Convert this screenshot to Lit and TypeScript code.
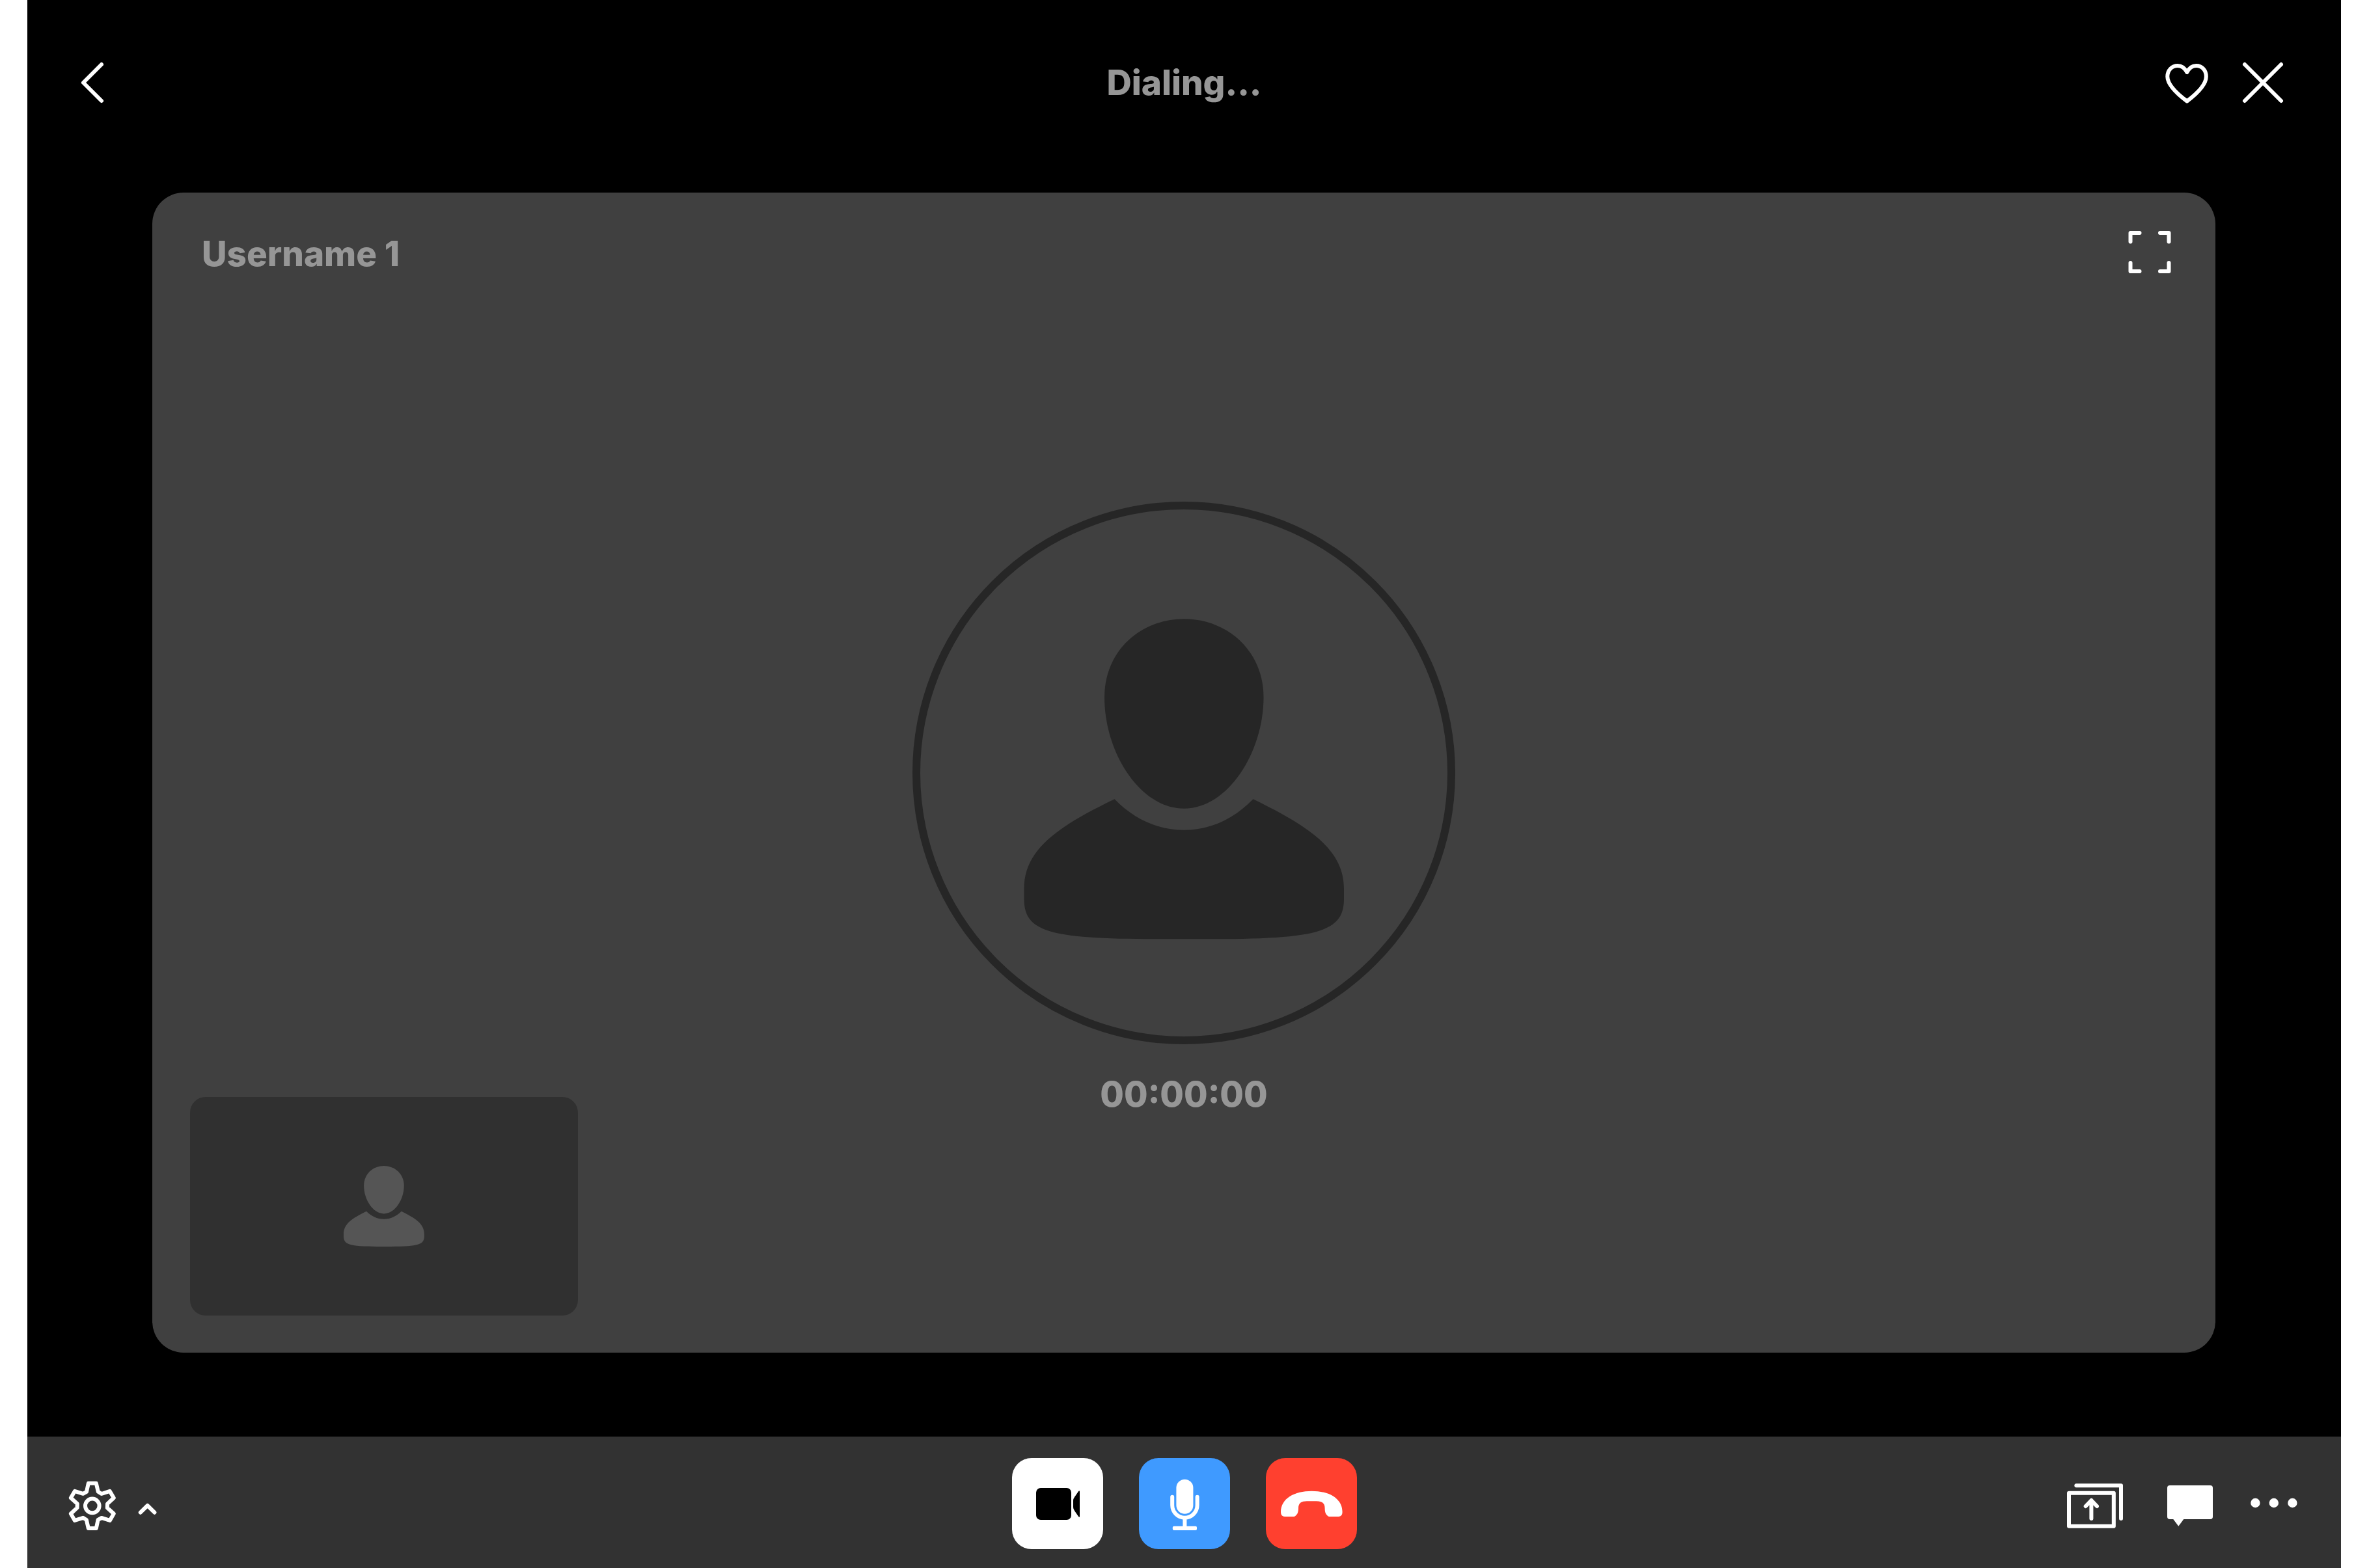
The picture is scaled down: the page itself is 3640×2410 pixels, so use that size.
import { LitElement, html, css, svg } from "lit";
import { customElement, property } from "lit/decorators.js";

/** Outline of a six-toothed cog around (cx, cy). */
function cogPath(cx: number, cy: number): string {
  const tooth = [
    [-6, -34.6],
    [6, -34.6],
    [9, -21.6],
    [14.2, -18.4],
  ];
  const points: string[] = [];
  for (let i = 0; i < 6; i++) {
    const a = (i * Math.PI) / 3;
    for (const [x, y] of tooth) {
      const px = cx + x * Math.cos(a) - y * Math.sin(a);
      const py = cy + x * Math.sin(a) + y * Math.cos(a);
      points.push(`${px.toFixed(2)} ${py.toFixed(2)}`);
    }
  }
  return `M${points.join("L")}Z`;
}

const person = svg`
  <path d="M245.7 0C180 0 123.5 48 123.5 120.5C123.5 205 178 291.5 245.7 291.5C313 291.5 368 205 368 120.5C368 48 311 0 245.7 0Z"/>
  <path d="M139 277C168 307 205 324.5 245.7 324.5S323 307 352 277C440 320 491.5 355 491.5 415V430C491.5 480 455 492 288 492H203C36 492 0 480 0 430V415C0 355 50 320 139 277Z"/>
`;

@customElement("call-avatar")
export class CallAvatar extends LitElement {
  @property({ type: Boolean }) ringed = false;

  static styles = css`
    :host {
      display: block;
    }
    .art {
      display: block;
      width: 100%;
      fill: currentColor;
    }
    .ring {
      fill: none;
      stroke: currentColor;
      stroke-width: 12;
    }
  `;

  render() {
    return this.ringed
      ? html`<svg class="art" viewBox="0 0 834 834" aria-hidden="true">
          <circle class="ring" cx="417" cy="417" r="411" />
          <g transform="translate(171.5 180.3)">${person}</g>
        </svg>`
      : html`<svg class="art" viewBox="0 0 492 492" aria-hidden="true">${person}</svg>`;
  }
}

@customElement("app-root")
export class AppRoot extends LitElement {
  @property() status = "Dialing...";
  @property() name = "Username 1";
  @property() elapsed = "00:00:00";

  static styles = css`
    :host {
      display: block;
      box-sizing: border-box;
      min-height: 100vh;
      padding: 0 43px 0 42px;
      background: #fff;
      color: #969696;
      font: 800 53px/60px Inter, "Liberation Sans", sans-serif;
    }
    .call {
      display: flex;
      flex-direction: column;
      min-height: 100vh;
      background: #000;
    }
    .label {
      margin: 0;
      font: inherit;
    }
    .icon-button {
      display: block;
      padding: 0;
      border: 0;
      background: none;
      color: #fff;
      cursor: pointer;
    }
    .icon {
      display: block;
      fill: currentColor;
    }
    .line {
      fill: none;
      stroke: currentColor;
      stroke-width: 6;
      stroke-linecap: round;
      stroke-linejoin: round;
    }
    .header {
      display: grid;
      grid-template-columns: 1fr auto 1fr;
      align-items: center;
      padding: 83px 56px;
    }
    .header-actions {
      display: flex;
      justify-content: flex-end;
      gap: 29px;
      padding-right: 20px;
    }
    .stage {
      display: flex;
      flex: 1;
      padding: 42px 193px 129px 192px;
    }
    .card {
      display: grid;
      flex: 1;
      grid-template-rows: 1fr auto 1fr;
      padding: 58px 58px 57px;
      border-radius: 48px;
      background: #404040;
    }
    .card-top {
      display: flex;
      align-items: flex-end;
      justify-content: space-between;
      align-self: start;
      padding: 0 10px 0 18px;
    }
    .peer {
      justify-self: center;
      width: 834px;
      max-width: 100%;
      color: #262626;
    }
    .card-bottom {
      display: grid;
      grid-template-columns: 1fr auto 1fr;
    }
    .timer {
      padding-top: 47px;
    }
    .self-view {
      display: flex;
      align-items: center;
      justify-content: center;
      align-self: end;
      width: 596px;
      height: 336px;
      border-radius: 24px;
      background: #303030;
      color: #555;
    }
    .self-avatar {
      width: 124px;
    }
    .toolbar {
      display: grid;
      grid-template-columns: 1fr auto 1fr;
      align-items: center;
      padding: 33px 56px 29px;
      background: #323232;
    }
    .settings {
      display: flex;
      gap: 20px;
    }
    .controls {
      display: flex;
      gap: 55px;
    }
    .tools {
      display: flex;
      justify-content: flex-end;
      gap: 48px;
    }
    .round {
      border-radius: 30px;
    }
    .camera {
      background: #fff;
      color: #000;
    }
    .mic {
      background: #3f9aff;
    }
    .hang-up {
      background: #ff402f;
    }
  `;

  render() {
    return html`
      <div class="call">
        <header class="header">
          <div>
            <button class="icon-button" aria-label="Back">
              <svg class="icon" width="88" height="88" viewBox="0 0 88 88">
                <path class="line" d="M58 16L30 44L58 72" />
              </svg>
            </button>
          </div>
          <h1 class="label">${this.status}</h1>
          <div class="header-actions">
            <button class="icon-button" aria-label="Favourite">
              <svg class="icon" width="88" height="88" viewBox="0 0 88 88">
                <path class="line" d="M44.3 28C41 22 36 18 30 18C21 18 14.3 25 14.3 34.7C14.3 46 25 58 44.3 72.5C63.5 58 73.8 46 73.8 34.7C73.8 25 67.5 18 58.5 18C52.5 18 47.5 22 44.3 28Z" />
              </svg>
            </button>
            <button class="icon-button" aria-label="Close">
              <svg class="icon" width="88" height="88" viewBox="0 0 88 88">
                <path class="line" d="M16 16L72 72M72 16L16 72" />
              </svg>
            </button>
          </div>
        </header>

        <main class="stage">
          <section class="card">
            <div class="card-top">
              <h2 class="label">${this.name}</h2>
              <button class="icon-button" aria-label="Full screen">
                <svg class="icon" width="66" height="66" viewBox="0 0 66 66">
                  <path class="line" d="M3.5 17.5V4H17.5M49 4H62.5V17.5M62.5 50V63H49M17.5 63H3.5V50" />
                </svg>
              </button>
            </div>
            <call-avatar class="peer" ringed></call-avatar>
            <div class="card-bottom">
              <div class="self-view">
                <call-avatar class="self-avatar"></call-avatar>
              </div>
              <time class="timer">${this.elapsed}</time>
            </div>
          </section>
        </main>

        <footer class="toolbar">
          <div class="settings">
            <button class="icon-button" aria-label="Settings">
              <svg class="icon" width="88" height="88" viewBox="0 0 88 88">
                <path class="line" d=${cogPath(43.8, 47.4)} />
                <circle class="line" cx="43.8" cy="47.4" r="10.8" />
              </svg>
            </button>
            <button class="icon-button" aria-label="More settings">
              <svg class="icon" width="40" height="88" viewBox="0 0 40 88">
                <path class="line" d="M9.8 57.7L20.6 47L31.4 57.7" />
              </svg>
            </button>
          </div>

          <div class="controls">
            <button class="icon-button round camera" aria-label="Camera">
              <svg class="icon" width="140" height="140" viewBox="0 0 140 140">
                <rect x="37" y="46" width="54" height="49" rx="7" />
                <path d="M94 65.5Q94 62.5 96 60L102.2 51Q104 49.3 104 52V89.5Q104 91.8 102.2 90L96 81Q94 78.5 94 75.5Z" />
              </svg>
            </button>
            <button class="icon-button round mic" aria-label="Microphone">
              <svg class="icon" width="140" height="140" viewBox="0 0 140 140">
                <rect x="57.4" y="32.7" width="26" height="53" rx="13" />
                <path class="line" d="M51.2 59.8V72.6A19.2 19.2 0 0 0 89.6 72.6V59.8M70.4 92V106" />
                <rect x="51.8" y="104.7" width="37.2" height="6.4" rx="2" />
              </svg>
            </button>
            <button class="icon-button round hang-up" aria-label="Hang up">
              <svg class="icon" width="140" height="140" viewBox="0 0 140 140">
                <path d="M70.3 50.7C44 50.7 23 62 23 83Q23 90 29 90H43.5C48 88 50 84 50 77C50 69 55 66.3 63 66.3H77.5C86 66.3 90.6 69 90.6 77C90.6 84 92.5 88 97 90H111.5Q117.6 90 117.6 83C117.6 62 97 50.7 70.3 50.7Z" />
              </svg>
            </button>
          </div>

          <div class="tools">
            <button class="icon-button" aria-label="Share screen">
              <svg class="icon" width="100" height="88" viewBox="0 0 100 88">
                <rect class="line" x="10" y="27.7" width="68.8" height="51" />
                <path class="line" d="M21.3 16.3H90V67M44.4 67V39M35.7 48L44.4 39L53 48" />
              </svg>
            </button>
            <button class="icon-button" aria-label="Chat">
              <svg class="icon" width="92" height="88" viewBox="0 0 92 88">
                <rect x="13" y="16" width="70" height="52" rx="4" />
                <path d="M21.5 67H39L30.3 78.8Z" />
              </svg>
            </button>
            <button class="icon-button" aria-label="More">
              <svg class="icon" width="84" height="88" viewBox="0 0 84 88">
                <circle cx="8.4" cy="43" r="7.2" />
                <circle cx="36.8" cy="43" r="7.2" />
                <circle cx="65.4" cy="43" r="7.2" />
              </svg>
            </button>
          </div>
        </footer>
      </div>
    `;
  }
}
